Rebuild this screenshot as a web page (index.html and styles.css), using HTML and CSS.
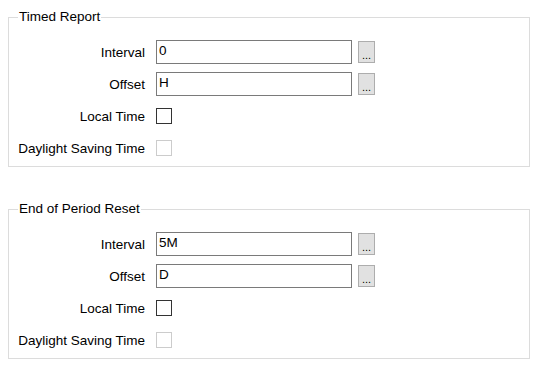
FILE: index.html
```html
<!DOCTYPE html>
<html lang="en">
<head>
    <meta charset="UTF-8">
    <title>Report Settings</title>
    <link rel="stylesheet" href="styles.css">
</head>
<body>
    <fieldset class="group first">
        <legend>Timed Report</legend>
        <div class="row">
            <label class="caption">Interval</label>
            <input class="field" type="text" value="0">
            <button class="pick">...</button>
        </div>
        <div class="row">
            <label class="caption">Offset</label>
            <input class="field" type="text" value="H">
            <button class="pick">...</button>
        </div>
        <div class="row">
            <label class="caption">Local Time</label>
            <input class="check" type="checkbox">
        </div>
        <div class="row">
            <label class="caption">Daylight Saving Time</label>
            <input class="check" type="checkbox" disabled>
        </div>
    </fieldset>

    <fieldset class="group">
        <legend>End of Period Reset</legend>
        <div class="row">
            <label class="caption">Interval</label>
            <input class="field" type="text" value="5M">
            <button class="pick">...</button>
        </div>
        <div class="row">
            <label class="caption">Offset</label>
            <input class="field" type="text" value="D">
            <button class="pick">...</button>
        </div>
        <div class="row">
            <label class="caption">Local Time</label>
            <input class="check" type="checkbox">
        </div>
        <div class="row">
            <label class="caption">Daylight Saving Time</label>
            <input class="check" type="checkbox" disabled>
        </div>
    </fieldset>
</body>
</html>
```

FILE: styles.css
```css
body {
    margin: 0;
    background-color: #ffffff;
    font-family: "Liberation Sans", Arial, sans-serif;
    font-size: 13.5px;
    color: #000000;
}
.group {
    margin: 9px 8px 0;
    padding: 15px 0 6px;
    border: 1px solid #dcdcdc;
    min-width: 0;
}
.group.first {
    margin-bottom: 34px;
}
.group legend {
    margin-left: 9px;
    padding: 0 1px;
    line-height: 16px;
}
.row {
    display: flex;
    align-items: center;
    height: 24px;
    margin-bottom: 8px;
}
.row:last-child {
    margin-bottom: 0;
}
.caption {
    width: 136px;
    text-align: right;
    margin-right: 11px;
}
.field {
    box-sizing: border-box;
    width: 196px;
    height: 24px;
    margin: 0;
    padding: 0 2px 3px;
    border: 1px solid #7a7a7a;
    border-radius: 0;
    outline: none;
    font-family: inherit;
    font-size: 13.5px;
    color: #000000;
}
.pick {
    box-sizing: border-box;
    width: 17px;
    height: 22px;
    margin: 0 0 0 6px;
    padding: 6px 0 0;
    border: 1px solid #adadad;
    background-color: #e1e1e1;
    font-family: inherit;
    font-size: 11px;
    line-height: 11px;
    color: #000000;
}
.check {
    appearance: none;
    box-sizing: border-box;
    width: 16px;
    height: 16px;
    margin: 0;
    border: 1px solid #333333;
    background-color: #ffffff;
}
.check:disabled {
    border-color: #cccccc;
}
```
